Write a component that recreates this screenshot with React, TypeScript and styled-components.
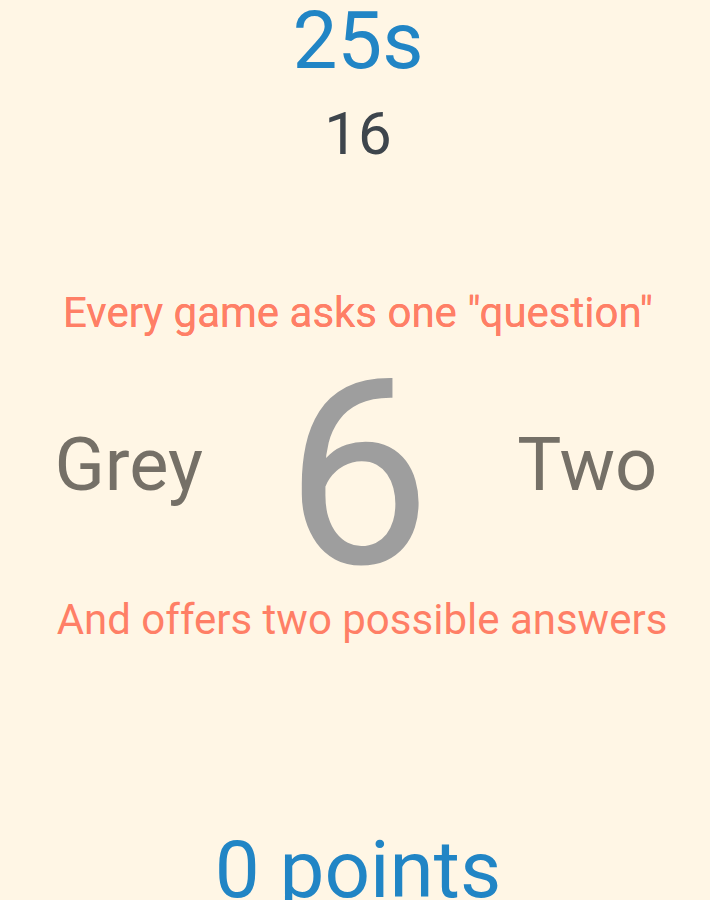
import React from "react";
import styled, { createGlobalStyle } from "styled-components";

const GlobalStyle = createGlobalStyle`
  * { box-sizing: border-box; }
  body {
    margin: 0;
    background: #fff6e5;
    font-family: Roboto, sans-serif;
    overflow: hidden;
  }
`;

const Game = styled.main`
  display: flex;
  flex-direction: column;
  padding: 1px 0 0 6px;
  text-align: center;
`;

const Header = styled.header`
  display: flex;
  flex-direction: column;
  gap: 23px;
`;

const Status = styled.div`
  font-size: 80px;
  line-height: 80px;
  color: #2185c5;
`;

const Count = styled.div`
  font-size: 60px;
  line-height: 60px;
  color: #3e454c;
`;

const Round = styled.section`
  display: flex;
  flex-direction: column;
  margin: 125px 0 186px;
`;

const Hint = styled.p<{ $strong?: boolean }>`
  margin: 0;
  padding-left: ${(p) => (p.$strong ? "0" : "8px")};
  font-size: 42px;
  line-height: 48px;
  color: #ff7f66;
  text-shadow: ${(p) => (p.$strong ? "0 0 0 #ff7f66" : "none")};
`;

const Board = styled.div`
  display: grid;
  grid-template-columns: 1fr 1fr 1fr;
  align-items: center;
  padding: 0 8px;
`;

const Answer = styled.button`
  border: 0;
  padding: 0 0 3px;
  background: none;
  font: inherit;
  font-size: 74px;
  line-height: 80px;
  color: #757067;
  cursor: pointer;
`;

const Symbol = styled.div`
  padding-top: 15px;
  font-size: 260px;
  line-height: 244px;
  color: #9e9e9e;
`;

export default function App() {
  return (
    <>
      <GlobalStyle />
      <Game>
        <Header>
          <Status>25s</Status>
          <Count>16</Count>
        </Header>
        <Round>
          <Hint $strong>Every game asks one "question"</Hint>
          <Board>
            <Answer type="button">Grey</Answer>
            <Symbol>6</Symbol>
            <Answer type="button">Two</Answer>
          </Board>
          <Hint>And offers two possible answers</Hint>
        </Round>
        <Status>0 points</Status>
      </Game>
    </>
  );
}
